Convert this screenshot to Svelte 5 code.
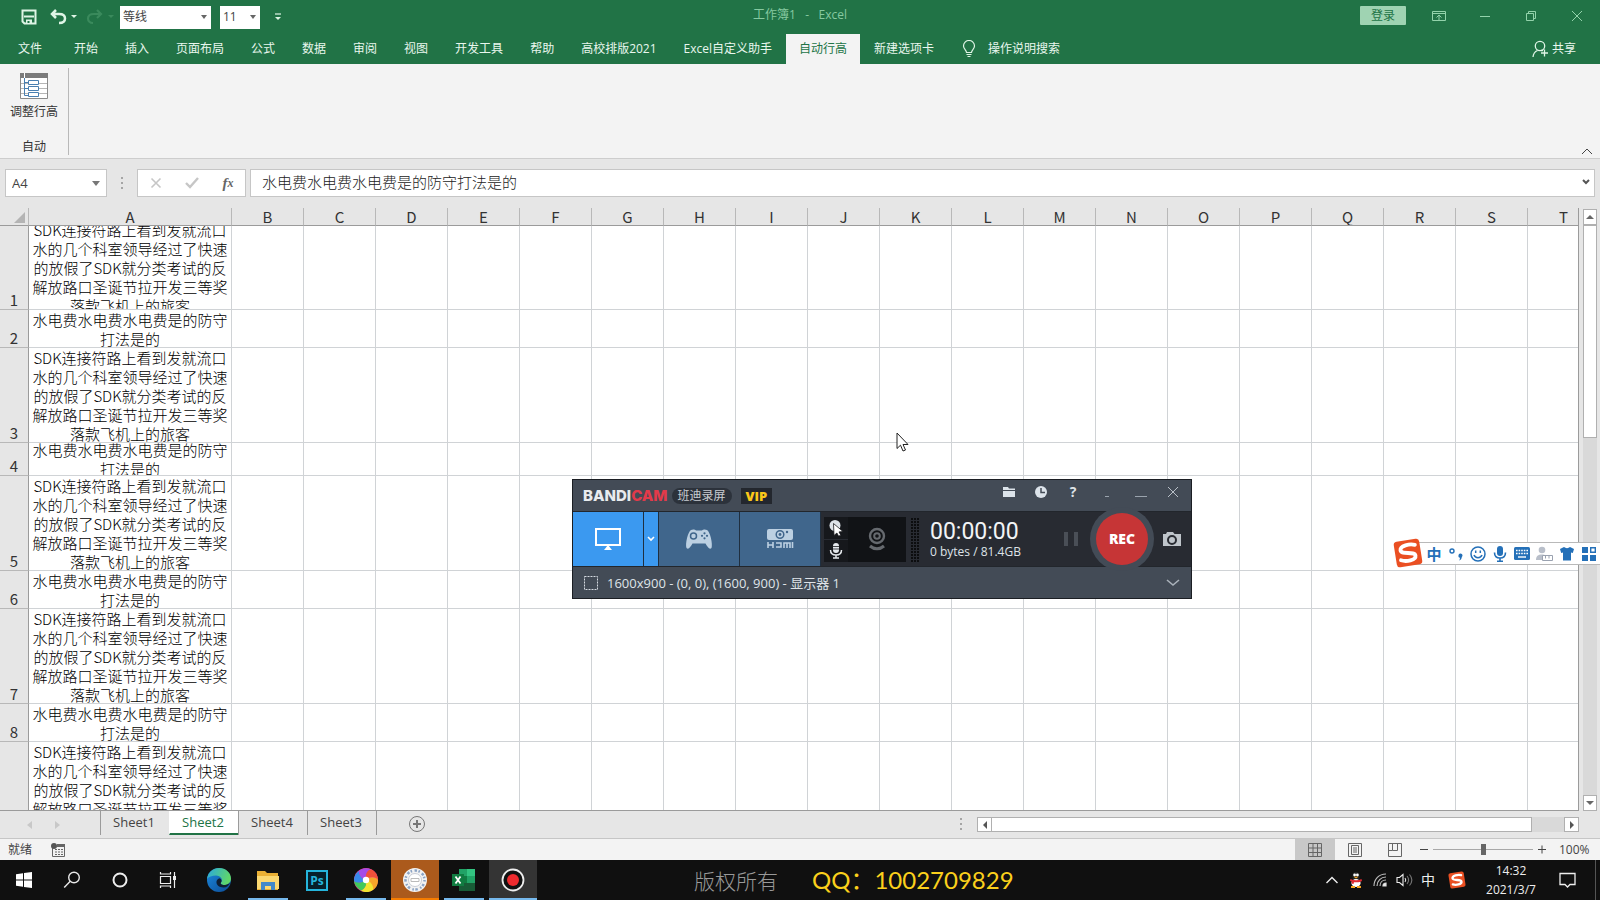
<script>
  const longText = 'SDK连接符路上看到发就流口水的几个科室领导经过了快速的放假了SDK就分类考试的反解放路口圣诞节拉开发三等奖落款飞机上的旅客';
  const shortText = '水电费水电费水电费是的防守打法是的';
  const columns = 'BCDEFGHIJKLMNOPQRST'.split('');
  const rows = [
    { n: '1', h: 84, t: longText },
    { n: '2', h: 38, t: shortText },
    { n: '3', h: 95, t: longText },
    { n: '4', h: 33, t: shortText },
    { n: '5', h: 95, t: longText },
    { n: '6', h: 38, t: shortText },
    { n: '7', h: 95, t: longText },
    { n: '8', h: 38, t: shortText },
    { n: '', h: 95, t: longText }
  ];
  const tabs = ['开始', '插入', '页面布局', '公式', '数据', '审阅', '视图', '开发工具', '帮助', '高校排版2021', 'Excel自定义助手', '自动行高', '新建选项卡'];
  let activeTab = $state('自动行高');
  const sheets = ['Sheet1', 'Sheet2', 'Sheet4', 'Sheet3'];
  let activeSheet = $state('Sheet2');
  let formula = $state(shortText);
  let zoom = $state(50);
</script>

{#snippet sogou(size)}
  <svg width={size} height={size} viewBox="0 0 28 28" aria-hidden="true">
    <g transform="rotate(-9 14 14)">
      <rect x="2" y="2" width="24" height="24" rx="3" fill="#ea4f22" />
      <path d="M21.500 7.500C17 5.500 7.500 6 7.500 10.500c0 4.500 13 2.500 13 7 0 4.500-9.500 4.500-14 2.200" fill="none" stroke="#fff" stroke-width="3.600" stroke-linecap="round" />
    </g>
  </svg>
{/snippet}

<div class="app">
  <header class="title">
    <div class="qat">
      <button class="save" aria-label="保存">
        <svg width="16" height="16" viewBox="0 0 16 16"><path d="M1.500 1.500h13v13h-11l-2-2z" fill="none" stroke="#dff5e6" stroke-width="2" /><path d="M3 7.500h10" stroke="#dff5e6" stroke-width="2" /><path d="M5 10.500h6V15H5z" fill="#dff5e6" /><path d="M6.500 12h2v2h-2z" fill="#217346" /></svg>
      </button>
      <button class="undo" aria-label="撤消">
        <svg width="28" height="16" viewBox="0 0 28 16"><path d="M6 1L2 5l4 4M2.500 5H9c4 0 6 2 6 4.500S13 14 9 14" fill="none" stroke="#dff5e6" stroke-width="2.500" /><path d="M21 6h6l-3 3z" fill="#dff5e6" /></svg>
      </button>
      <button class="redo" aria-label="恢复">
        <svg width="28" height="16" viewBox="0 0 28 16"><path d="M11 1l4 4-4 4M14.500 5H8C4 5 2 7 2 9.500S4 14 7 14" fill="none" stroke="#3a8a5c" stroke-width="2.200" /><path d="M22 6h6l-3 3z" fill="#3a8a5c" /></svg>
      </button>
      <label class="combo font">
        <select aria-label="字体"><option>等线</option></select>
        <svg width="6" height="4" viewBox="0 0 6 4"><path d="M0 0h6L3 4z" fill="#666" /></svg>
      </label>
      <label class="combo size">
        <select aria-label="字号"><option>11</option></select>
        <svg width="6" height="4" viewBox="0 0 6 4"><path d="M0 0h6L3 4z" fill="#666" /></svg>
      </label>
      <button class="more" aria-label="自定义快速访问工具栏">
        <svg width="8" height="8" viewBox="0 0 8 8"><path d="M1 1h6" stroke="#dff5e6" stroke-width="1.200" /><path d="M1 4h6L4 7z" fill="#dff5e6" /></svg>
      </button>
    </div>
    <h1>工作簿1&nbsp;&nbsp; -&nbsp;&nbsp; Excel</h1>
    <div class="winctl">
      <button class="login">登录</button>
      <button aria-label="功能区显示选项"><svg width="14" height="12" viewBox="0 0 14 12" fill="none" stroke="#93d3ab"><path d="M.5 1.500h13v9H.5zM.5 3.500h13M7 10V5.500M4.500 7.500L7 5l2.500 2.500" /></svg></button>
      <button aria-label="最小化"><svg width="12" height="12" viewBox="0 0 12 12" stroke="#93d3ab"><path d="M1 6.500h10" /></svg></button>
      <button aria-label="向下还原"><svg width="12" height="12" viewBox="0 0 12 12" fill="none" stroke="#93d3ab"><path d="M1.500 3.500h7v7h-7zM3.500 3.500v-2h7v7h-2" /></svg></button>
      <button aria-label="关闭"><svg width="12" height="12" viewBox="0 0 12 12" stroke="#93d3ab"><path d="M1 1l10 10M11 1L1 11" /></svg></button>
    </div>
  </header>

  <nav class="tabs">
    <button class="file">文件</button>
    {#each tabs as tab}
      <button class:active={tab === activeTab} onclick={() => (activeTab = tab)}>{tab}</button>
    {/each}
    <button class="tell">
      <svg width="14" height="18" viewBox="0 0 14 18" fill="none" stroke="#dff5e6" stroke-width="1.200"><path d="M4.500 12.500c0-2.500-3-3.500-3-6.500a5.500 5.500 0 0 1 11 0c0 3-3 4-3 6.500zM4.500 14.500h5M5.500 16.500h3" /></svg>
      <span>操作说明搜索</span>
    </button>
    <button class="share">
      <svg width="17" height="18" viewBox="0 0 17 18" fill="none" stroke="#dff5e6" stroke-width="1.300"><circle cx="8" cy="6" r="4.700" /><path d="M1 17c.3-3.500 2-5.500 4.500-6.500M9 10.500h2M12.500 9.500v7M9 13h7" /></svg>
      <span>共享</span>
    </button>
  </nav>

  <section class="ribbon">
    <div class="group">
      <button class="rowheight">
        <svg width="28" height="26" viewBox="0 0 28 26"><path d="M.5.500h27v25H.5z" fill="#fff" stroke="#8a8a8a" /><path d="M0 0h28v5H0z" fill="#7b7b7b" /><path d="M4.500 0v5" stroke="#fff" /><path d="M1 10.500h26M1 15.500h26M1 20.500h26" stroke="#b5b5b5" /><path d="M4.500 5v17.500H8M4.500 9.500H8M4.500 15.500H8" fill="none" stroke="#4a7fb0" /><path d="M8.500 7.500h10v4h-10zM8.500 13.500h10v4h-10zM8.500 19.500h10v4h-10z" fill="#fff" stroke="#4a7fb0" /></svg>
        <span>调整行高</span>
      </button>
      <span class="groupname">自动</span>
    </div>
    <button class="collapse" aria-label="折叠功能区"><svg width="12" height="7" viewBox="0 0 12 7" fill="none" stroke="#444"><path d="M1 6l5-5 5 5" /></svg></button>
  </section>

  <section class="formula">
    <div class="namebox">
      <input aria-label="名称框" value="A4" />
      <svg width="8" height="5" viewBox="0 0 8 5"><path d="M0 0h8L4 5z" fill="#777" /></svg>
    </div>
    <span class="grip"></span>
    <div class="fxbox">
      <button aria-label="取消"><svg width="12" height="12" viewBox="0 0 12 12" stroke="#c6c6c6" stroke-width="1.600"><path d="M1.500 1.500l9 9M10.500 1.500l-9 9" /></svg></button>
      <button aria-label="输入"><svg width="14" height="12" viewBox="0 0 14 12" fill="none" stroke="#c6c6c6" stroke-width="2.400"><path d="M1 6l4 4 8-9" /></svg></button>
      <button aria-label="插入函数" class="fx">f<sub>x</sub></button>
    </div>
    <div class="fbox">
      <input aria-label="编辑栏" bind:value={formula} />
      <svg width="8" height="6" viewBox="0 0 8 6" fill="none" stroke="#555" stroke-width="2"><path d="M1 1l3 3 3-3" /></svg>
    </div>
  </section>

  <main class="sheet">
    <div class="grid">
      <table>
        <thead>
          <tr>
            <th class="corner"><svg width="11" height="11" viewBox="0 0 11 11"><path d="M11 0v11H0z" fill="#b4b4b4" /></svg></th>
            <th class="cola">A</th>
            {#each columns as c}<th class="col">{c}</th>{/each}
          </tr>
        </thead>
        <tbody>
          {#each rows as r}
            <tr>
              <th class="rown"><div class="num" style="height:{r.h - 1}px">{r.n}</div></th>
              <td><div class="cell" style="height:{r.h - 1}px"><span>{r.t}</span></div></td>
              {#each columns as c}<td></td>{/each}
            </tr>
          {/each}
        </tbody>
      </table>
    </div>
    <div class="vscroll">
      <button aria-label="向上滚动"><svg width="8" height="4" viewBox="0 0 8 4"><path d="M0 4h8L4 0z" fill="#666" /></svg></button>
      <div class="vthumb"></div>
      <div class="vtrack"></div>
      <button aria-label="向下滚动"><svg width="8" height="4" viewBox="0 0 8 4"><path d="M0 0h8L4 4z" fill="#666" /></svg></button>
    </div>

    <svg class="pointer" width="13" height="20" viewBox="0 0 13 20"><path d="M1 1v15.500l3.500-3.300L7 19l2.500-1-2.500-5.500h5z" fill="#fff" stroke="#222" /></svg>
  </main>

  <section class="sheetbar">
    <div class="arrows">
      <svg width="5" height="8" viewBox="0 0 5 8"><path d="M5 0v8L0 4z" fill="#c8c8c8" /></svg>
      <svg width="5" height="8" viewBox="0 0 5 8"><path d="M0 0v8l5-4z" fill="#c8c8c8" /></svg>
    </div>
    {#each sheets as s}
      <button class="stab" class:on={s === activeSheet} onclick={() => (activeSheet = s)}>{s}</button>
    {/each}
    <span class="sep"></span>
    <button class="add" aria-label="新工作表"><svg width="18" height="18" viewBox="0 0 18 18" fill="none" stroke="#777"><circle cx="9" cy="9" r="7.500" /><path d="M9 5v8M5 9h8" stroke-width="2" /></svg></button>
    <span class="grip hgrip"></span>
    <div class="hscroll">
      <button aria-label="向左滚动"><svg width="4" height="8" viewBox="0 0 4 8"><path d="M4 0v8L0 4z" fill="#555" /></svg></button>
      <div class="hthumb"></div>
      <div class="htrack"></div>
      <button aria-label="向右滚动"><svg width="4" height="8" viewBox="0 0 4 8"><path d="M0 0v8l4-4z" fill="#555" /></svg></button>
    </div>
  </section>

  <footer class="status">
    <span>就绪</span>
    <svg width="14" height="14" viewBox="0 0 14 14"><path d="M1.500 5v8.500h12V2" fill="none" stroke="#666" /><path d="M6 1h8v3H6z" fill="#666" /><circle cx="3" cy="3" r="3" fill="#555" /><path d="M4 6.500h2M7 6.500h2M10 6.500h2M4 9h2M7 9h2M10 9h2M4 11.500h2M7 11.500h2M10 11.500h2" stroke="#666" /></svg>
    <div class="views">
      <button class="on" aria-label="普通"><svg width="14" height="14" viewBox="0 0 14 14" fill="none" stroke="#666"><path d="M.5.500h13v13H.5zM.5 5h13M.5 9.500h13M5 .5v13M9.500.500v13" /></svg></button>
      <button aria-label="页面布局"><svg width="14" height="14" viewBox="0 0 14 14" fill="none" stroke="#666"><path d="M.5.500h13v13H.5zM3.500 2.500h7v9h-7zM5 5h4M5 7h4M5 9h4" /></svg></button>
      <button aria-label="分页预览"><svg width="14" height="14" viewBox="0 0 14 14" fill="none" stroke="#666"><path d="M.5.500h13v13H.5zM4.500.500v7h5v-7M4.500 7.500h-4" /></svg></button>
    </div>
    <button class="zb" aria-label="缩小"><svg width="10" height="10" viewBox="0 0 10 10" stroke="#444"><path d="M1 4.500h8" /></svg></button>
    <input class="zoom" type="range" min="0" max="100" bind:value={zoom} aria-label="缩放" />
    <button class="zb" aria-label="放大"><svg width="10" height="10" viewBox="0 0 10 10" stroke="#444"><path d="M1 4.500h8M5 .5v8" /></svg></button>
    <span class="pct">100%</span>
  </footer>

  <footer class="taskbar">
    <div class="sys">
      <button aria-label="开始"><svg width="16" height="16" viewBox="0 0 16 16" fill="#fff"><path d="M0 2.200L7 1.200v6.300H0zM8 1l8-1v7.500H8zM0 8.500h7v6.300l-7-1zM8 8.500h8V16l-8-1z" /></svg></button>
      <button aria-label="搜索"><svg width="18" height="18" viewBox="0 0 18 18" fill="none" stroke="#e8e8e8" stroke-width="1.400"><circle cx="11" cy="6.500" r="5.300" /><path d="M7.200 10.300L1.200 16.500" /></svg></button>
      <button aria-label="Cortana"><svg width="18" height="18" viewBox="0 0 18 18" fill="none" stroke="#eee" stroke-width="2"><circle cx="9" cy="9" r="6.500" /></svg></button>
      <button aria-label="任务视图"><svg width="18" height="16" viewBox="0 0 18 16" fill="none" stroke="#eee" stroke-width="1.200"><path d="M1.500 4.500h10v7h-10zM1.500 0v2h10V0M1.500 16v-2h10v2M15.500 0v16" /><path d="M14 4h3v4h-3z" fill="#eee" stroke="none" /></svg></button>
    </div>
    <div class="apps">
      <button aria-label="Edge"><svg width="26" height="26" viewBox="0 0 26 26"><defs><linearGradient id="ea" x1="0" y1="0" x2="1" y2=".3"><stop offset="0" stop-color="#2aa7e0" /><stop offset="1" stop-color="#5fd66a" /></linearGradient><linearGradient id="eb" x1="0" y1="0" x2="1" y2="1"><stop offset="0" stop-color="#1c8be0" /><stop offset="1" stop-color="#0c4a93" /></linearGradient></defs><circle cx="13" cy="13" r="12" fill="url(#eb)" /><path d="M1 12C2 5 7 1 13 1c7 0 12 5 12 10.500 0 4-3 6.500-6.500 6.500-3 0-4.500-1.300-3.500-2.500 2.500-3-.5-7-5-7-4 0-7.500 1.500-9 3.500z" fill="url(#ea)" /><path d="M15 15.500c-1 1.200.5 2.500 3.500 2.500 2.300 0 4.300-1 5.500-2.800-1 3.300-3.500 5.300-6.500 5.300-4.500 0-7.500-3-7-6 .2-1.500 1.500-3 3-3.300 2 .8 2.800 2.800 1.500 4.300z" fill="#0f1f33" /></svg></button>
      <button aria-label="文件资源管理器" class="run"><svg width="24" height="24" viewBox="0 0 24 24"><path d="M1 3h8l2 2h11v17H1z" fill="#eab035" /><path d="M1 8h22v13H1z" fill="#fbd871" /><path d="M5 14h14v8h-4v-4H9v4H5z" fill="#4289c9" /></svg></button>
      <button aria-label="Photoshop" class="ps"><span>Ps</span></button>
      <button aria-label="色轮" class="run"><svg width="24" height="24" viewBox="0 0 24 24"><circle cx="12" cy="12" r="12" fill="#ef3d8e" /><path d="M12 12C10 6 13 1 17 1.200 21 3 24 7 24 12c-3-4-8-4-12 0z" fill="#f0503a" /><path d="M12 12c4-4 10-3 12 0 0 5-2 8-5 10 0-5-3-9-7-10z" fill="#f5a52a" /><path d="M12 12c5 1 8 6 7 10-4 3-9 2.500-12 .5 4-2 6-6 5-10.500z" fill="#f1e531" /><path d="M12 12c1 5-1 9-5 10.500C3 20 .500 17 0 13c4 2 8 2 12-1z" fill="#42c95b" /><path d="M12 12c-4 3-9 3.500-12 1C0 8 2 5 5 3c0 4 3 8 7 9z" fill="#3889ec" /><path d="M12 12C8 11 5 7 5 3c3-3 8-3.500 12-1.800-4 .8-6 5.800-5 10.800z" fill="#a44ce8" /><circle cx="12" cy="12" r="3.200" fill="#fff" /></svg></button>
      <button aria-label="印章" class="seal"><svg width="26" height="26" viewBox="0 0 26 26"><circle cx="13" cy="13" r="12" fill="#f2f2f2" /><circle cx="13" cy="13" r="9.500" fill="none" stroke="#8ba3c4" stroke-width="2.500" stroke-dasharray="1.500 2.500 2.500 1.500" /><circle cx="13" cy="13" r="6.500" fill="#fff" stroke="#c8cdd6" /><path d="M9 11.500h8v3H9z" fill="none" stroke="#bbb" /></svg></button>
      <button aria-label="Excel" class="run"><svg width="24" height="24" viewBox="0 0 24 24"><path d="M7 1h16v22H7z" fill="#185c37" /><path d="M7 1h8v7H7z" fill="#21a366" /><path d="M15 1h8v7h-8z" fill="#33c481" /><path d="M7 8h8v7H7z" fill="#107c41" /><path d="M15 8h8v7h-8z" fill="#21a366" /><path d="M0 6h12v12H0z" fill="#107c41" /><path d="M3.500 8.500l5 7M8.500 8.500l-5 7" stroke="#fff" stroke-width="1.800" /></svg></button>
      <button aria-label="Bandicam" class="run rec"><svg width="24" height="24" viewBox="0 0 24 24"><circle cx="12" cy="12" r="10.500" fill="#111" stroke="#eee" stroke-width="1.800" /><circle cx="12" cy="12" r="6" fill="#ee2a2e" /></svg></button>
    </div>
    <p class="mark"><span>版权所有</span><strong>QQ：1002709829</strong></p>
    <div class="tray">
      <button aria-label="显示隐藏的图标"><svg width="14" height="8" viewBox="0 0 14 8" fill="none" stroke="#eee" stroke-width="1.400"><path d="M1.500 7L7 1.500 12.500 7" /></svg></button>
      <button aria-label="QQ"><svg width="14" height="16" viewBox="0 0 14 16"><ellipse cx="7" cy="4.500" rx="3.500" ry="4.500" fill="#222" /><circle cx="5.600" cy="3" r="1.400" fill="#fff" /><circle cx="8.400" cy="3" r="1.400" fill="#fff" /><path d="M4.500 4.800h5L7 6.500z" fill="#f5a623" /><ellipse cx="7" cy="11" rx="4.600" ry="4" fill="#fff" /><path d="M1.500 7c3.500 1.600 7.500 1.600 11 0l.5 2c-1.500 1-3 1.200-5 1.300L5 10.200 4.500 12l-2-.5.300-2L1 9z" fill="#e02a32" /><path d="M2 15h4M8 15h4" stroke="#f5a623" stroke-width="2" /></svg></button>
      <button aria-label="网络"><svg width="14" height="14" viewBox="0 0 14 14" fill="none" stroke="#ddd" stroke-width="1.200"><path d="M1 13C1 6 6 1 13 1M4 13c0-5 4-9 9-9M7 13c0-3.500 2.500-6 6-6" stroke="#bbb" /><path d="M10 13c0-1.800 1.200-3 3-3v3z" fill="#eee" /></svg></button>
      <button aria-label="音量"><svg width="17" height="14" viewBox="0 0 17 14" fill="none" stroke="#eee" stroke-width="1.100"><path d="M1 4.500h2.500L7 1.500v11L3.500 9.500H1z" /><path d="M9 5c1 1.300 1 2.700 0 4" /><path d="M11 3c2 2.500 2 5.500 0 8M13.500 1.500c3 3.500 3 7.500 0 11" stroke="#777" /></svg></button>
      <button class="ime">中</button>
      <button class="sg" aria-label="搜狗输入法">{@render sogou(18)}</button>
      <div class="clock"><time>14:32</time><time>2021/3/7</time></div>
      <button class="note" aria-label="通知"><svg width="17" height="17" viewBox="0 0 17 17" fill="none" stroke="#eee" stroke-width="1.300"><path d="M1 1.500h15v11h-5L8.500 15 6 12.500H1z" /></svg></button>
      <span class="peek"></span>
    </div>
  </footer>

  <section class="bandicam" aria-label="Bandicam">
    <div class="bhead">
      <span class="logo">BANDI<b>CAM</b></span>
      <span class="pill">班迪录屏</span>
      <span class="vip">VIP</span>
      <div class="bctl">
        <button aria-label="打开文件夹"><svg width="14" height="12" viewBox="0 0 14 12" fill="#dce3ea"><path d="M1 1h5l1 1.500h6V4H1zM1 5h12v6H1z" /></svg></button>
        <button aria-label="定时"><svg width="14" height="14" viewBox="0 0 14 14"><circle cx="7" cy="7" r="6" fill="#dce3ea" /><path d="M7 3v4.500h4" fill="none" stroke="#434b56" stroke-width="1.500" /></svg></button>
        <button class="q">?</button>
        <button class="wide" aria-label="精简模式"><svg width="12" height="12" viewBox="0 0 12 12" stroke="#9aa3ad"><path d="M4 10.500h4" /></svg></button>
        <button aria-label="最小化窗口"><svg width="12" height="12" viewBox="0 0 12 12" stroke="#9aa3ad"><path d="M0 10.500h12" /></svg></button>
        <button aria-label="关闭窗口"><svg width="12" height="12" viewBox="0 0 12 12" stroke="#b9c0c8"><path d="M1 1l10 10M11 1L1 11" /></svg></button>
      </div>
    </div>
    <div class="bbody">
      <button class="mode on screen" aria-label="屏幕录制"><svg width="28" height="24" viewBox="0 0 28 24"><path d="M2 2h24v16H2z" fill="none" stroke="#fff" stroke-width="2" /><path d="M14 18l4 5h-8z" fill="#fff" /></svg></button>
      <button class="mode on drop" aria-label="选择区域"><svg width="8" height="6" viewBox="0 0 8 6" fill="none" stroke="#fff" stroke-width="1.600"><path d="M1 1l3 3 3-3" /></svg></button>
      <button class="mode" aria-label="游戏录制"><svg width="28" height="22" viewBox="0 0 28 22"><path d="M6 2c2-1 4-.5 5 .500h6c1-1 3-1.500 5-.5 3 1.500 6 14 4.500 18-2 2-4-1-6-4.500h-13C5.500 19 3.500 22 1.500 20 0 16 3 3.500 6 2z" fill="#bcd0e2" /><circle cx="8.500" cy="8" r="3" fill="none" stroke="#40668c" stroke-width="1.500" /><g fill="#40668c"><circle cx="19.500" cy="5.300" r="1.100" /><circle cx="19.500" cy="10.300" r="1.100" /><circle cx="17" cy="7.800" r="1.100" /><circle cx="22" cy="7.800" r="1.100" /></g></svg></button>
      <button class="mode hdmi" aria-label="设备录制"><svg width="28" height="22" viewBox="0 0 28 22"><rect x="1" y="1" width="26" height="11" rx="2" fill="#bcd0e2" /><circle cx="14" cy="6.500" r="3.800" fill="none" stroke="#40668c" stroke-width="1.500" /><circle cx="14" cy="6.500" r="1.400" fill="#40668c" /><circle cx="21" cy="4" r="1.200" fill="#40668c" /><path d="M2 14v6M7 14v6M2 17h5M10 15h5v4h-5M18 20v-5h6v5M21 15v5M26.500 14v6" fill="none" stroke="#bcd0e2" stroke-width="1.600" /></svg></button>
      <div class="panel">
        <div class="small">
          <button aria-label="鼠标效果"><svg width="16" height="16" viewBox="0 0 16 16"><circle cx="7" cy="5.500" r="5.500" fill="#dde3e8" /><path d="M5.500 3.500l9.500 8-4 .4 1.800 3.300-2.200 1-1.700-3.200L6 15.500z" fill="#fff" stroke="#16181c" stroke-width=".8" /></svg></button>
          <button aria-label="麦克风"><svg width="14" height="16" viewBox="0 0 14 16"><rect x="4" y="0" width="6" height="10" rx="3" fill="#e4e8ec" /><path d="M4 3.500h6M4 6h6" stroke="#181a1e" stroke-width=".8" /><path d="M1.500 7c0 3.500 2.500 5 5.500 5s5.500-1.500 5.500-5M7 12v3M4 15h6" fill="none" stroke="#e4e8ec" stroke-width="1.500" /></svg></button>
        </div>
        <button class="cam" aria-label="摄像头"><svg width="20" height="24" viewBox="0 0 20 24" fill="none" stroke="#666a6f"><circle cx="10" cy="9" r="7" stroke-width="2.400" /><circle cx="10" cy="9" r="2.800" stroke-width="2" /><path d="M3 19c4 3.500 10 3.500 14 0" stroke-width="3" /></svg></button>
        <span class="meter"></span>
        <div class="time"><output>00:00:00</output><span>0 bytes / 81.4GB</span></div>
        <button class="pause" aria-label="暂停"><svg width="14" height="14" viewBox="0 0 14 14" fill="#4a4f57"><path d="M0 0h4v14H0zM10 0h4v14h-4z" /></svg></button>
        <button class="recbtn"><span>REC</span></button>
        <button class="shot" aria-label="截图"><svg width="18" height="16" viewBox="0 0 18 16"><path d="M0 3h3l1-2h6l1.500 2H18v12H0z" fill="#bfc5cb" /><circle cx="9" cy="9" r="4" fill="none" stroke="#282b32" stroke-width="2" /></svg></button>
      </div>
    </div>
    <div class="bfoot">
      <svg width="14" height="14" viewBox="0 0 14 14" fill="none" stroke="#d5dae0" stroke-dasharray="2 1"><path d="M.5.500h13v13H.5z" /></svg>
      <span>1600x900 - (0, 0), (1600, 900) - 显示器 1</span>
      <button aria-label="展开"><svg width="14" height="8" viewBox="0 0 14 8" fill="none" stroke="#aab2ba" stroke-width="1.600"><path d="M1 1l6 5 6-5" /></svg></button>
    </div>
  </section>

  <section class="sogou" aria-label="输入法工具栏">
    <span class="slogo">{@render sogou(30)}</span>
    <button class="zh">中</button>
    <button aria-label="标点"><svg width="16" height="16" viewBox="0 0 16 16"><circle cx="4" cy="5" r="2" fill="none" stroke="#2470b8" stroke-width="1.400" /><path d="M10.500 9.500a2 2 0 1 1 3.300 1.500c0 1.500-1 3-2.800 3.500.8-1 1-1.800.9-2.800a1.800 1.800 0 0 1-1.400-2.200z" fill="#2470b8" /></svg></button>
    <button aria-label="表情"><svg width="16" height="16" viewBox="0 0 16 16" fill="none" stroke="#2470b8" stroke-width="1.500"><circle cx="8" cy="8" r="7" /><path d="M5.700 4.500v2.500M10.300 4.500v2.500M4 9c1.200 3.500 6.800 3.500 8 0" /></svg></button>
    <button aria-label="语音"><svg width="14" height="16" viewBox="0 0 14 16"><rect x="4" y="0" width="6" height="10" rx="3" fill="#2470b8" /><path d="M1.500 6.500c0 4 2.500 5.500 5.500 5.500s5.500-1.500 5.500-5.500M7 12v3M4 15.200h6" fill="none" stroke="#2470b8" stroke-width="1.600" /></svg></button>
    <button aria-label="软键盘"><svg width="16" height="13" viewBox="0 0 16 13"><rect width="16" height="13" rx="1.500" fill="#2470b8" /><path d="M2 3.500h12M2 6.500h12" stroke="#fff" stroke-width="1.500" stroke-dasharray="1.600 1" /><path d="M4 10h8" stroke="#fff" stroke-width="1.400" /></svg></button>
    <button class="wide" aria-label="账户"><svg width="17" height="16" viewBox="0 0 17 16"><circle cx="6" cy="4" r="3.300" fill="#b9bfca" /><path d="M0 14c0-4 2-5.500 6-5.500 3 0 5 1 5.500 5.500z" fill="#b9bfca" /><path d="M6.500 9.500h10v5h-10zM9.500 9.500v3M13 9.500v3" fill="#fff" stroke="#9aa2b0" /></svg></button>
    <button aria-label="皮肤"><svg width="14" height="15" viewBox="0 0 14 15"><path d="M4 1c1.500 1.500 4.500 1.500 6 0l4 2-1.200 4L11 6.500V14.500H3V6.500L1.200 7 0 3z" fill="#2470b8" /></svg></button>
    <button aria-label="工具箱"><svg width="14" height="14" viewBox="0 0 14 14" fill="#2470b8"><path d="M0 0h6v6H0zM0 8h6v6H0zM8 8h6v6H8z" /><path d="M8.700.700h4.600v4.600H8.700z" fill="#fff" stroke="#2470b8" stroke-width="1.400" /></svg></button>
  </section>
</div>

<style>
  :global(body) { margin: 0; }
  .app {
    position: relative;
    display: flex;
    flex-direction: column;
    height: 100vh;
    overflow: hidden;
    background: #e6e6e6;
    font: 12px/16px "Open Sans", "Noto Sans CJK SC", sans-serif;
    color: #444;
  }
  button, input, select { font: inherit; color: inherit; border: 0; padding: 0; margin: 0; background: none; box-sizing: border-box; border-radius: 0; outline: none; }
  button { display: flex; align-items: center; justify-content: center; white-space: nowrap; flex: none; }
  svg { display: block; flex: none; }
  header, nav, section, footer { flex: none; }

  .title { display: grid; grid-template-columns: 1fr auto 1fr; height: 34px; background: #217346; }
  .title h1 { margin: 0; padding-top: 7px; font-size: 12px; font-weight: 400; color: #86c9a0; }
  .qat { display: flex; align-items: center; padding-left: 21px; }
  .save { margin-right: 13px; }
  .undo { margin-right: 8px; }
  .redo { margin-right: 6px; }
  .combo { display: grid; grid-template-columns: 1fr; align-items: center; height: 23px; background: #fff; color: #444; }
  .combo > * { grid-area: 1 / 1; }
  .combo select { appearance: none; width: 100%; padding-left: 3px; }
  .combo svg { justify-self: end; margin-right: 4px; }
  .font { width: 91px; }
  .size { width: 40px; margin-left: 9px; }
  .more { margin-left: 14px; }
  .winctl { display: flex; justify-content: flex-end; height: 31px; }
  .winctl button { width: 46px; }
  .winctl .login { height: 19px; margin: 6px 10px 0 0; background: #9fd3b2; color: #217346; border-radius: 1px; }

  .tabs { display: flex; gap: 1px; height: 30px; background: #217346; color: #e9f7ee; }
  .tabs button { padding: 0 13px 1px; }
  .tabs .file { width: 60px; }
  .tabs .active { background: #f3f3f3; color: #217346; }
  .tabs .tell { gap: 12px; padding-left: 14px; }
  .tabs .share { margin-left: auto; gap: 3px; padding-right: 24px; }

  .ribbon { display: flex; justify-content: space-between; height: 94px; background: #f3f3f3; border-bottom: 1px solid #cdcdcd; }
  .group { display: flex; flex-direction: column; justify-content: space-between; align-items: center; margin: 4px 0 3px; padding: 5px 10px 0; border-right: 1px solid #b8b8b8; color: #333; }
  .rowheight { flex-direction: column; gap: 5px; }
  .collapse { align-self: flex-end; width: 12px; margin: 0 7px 3px 0; }

  .formula { display: flex; height: 28px; padding: 10px 5px 11px; }
  .namebox, .fxbox, .fbox { display: flex; align-items: center; box-sizing: border-box; background: #fff; border: 1px solid #c6c6c6; }
  .namebox { width: 102px; padding: 0 6px; }
  .namebox input { width: 80px; flex: 1; font-size: 13px; }
  .grip { width: 2px; height: 12px; margin: 8px 14px; background: repeating-linear-gradient(#a5a5a5 0 2px, transparent 2px 5px); }
  .fxbox { width: 109px; }
  .fxbox button { width: 36px; }
  .fxbox .fx { font: italic 700 15px "Liberation Serif", serif; color: #666; }
  .fx sub { font-size: 12px; line-height: 8px; }
  .fbox { flex: 1; margin-left: 4px; padding: 0 4px 2px 11px; }
  .fbox input { flex: 1; font: 300 15px/20px "Noto Sans CJK SC", sans-serif; color: #222; }

  .sheet { position: relative; display: flex; flex: 1; min-height: 0; }
  .grid { flex: 1; min-width: 0; overflow: hidden; border-right: 1px solid #9b9b9b; border-bottom: 1px solid #9b9b9b; }
  table { width: 1600px; table-layout: fixed; border-collapse: separate; border-spacing: 0; font: 300 15px/19px "Noto Sans CJK SC", sans-serif; color: #000; }
  th, td { box-sizing: border-box; padding: 0; overflow: hidden; }
  th { font-weight: 400; color: #333; }
  thead th { height: 18px; line-height: 17px; background: #e6e6e6; border-right: 1px solid #b8b8b8; border-bottom: 1px solid #9b9b9b; }
  .corner { width: 29px; }
  .corner svg { margin: 2px 0 0 14px; }
  .cola { width: 203px; }
  .col { width: 72px; }
  td { background: #fff; border-right: 1px solid #d0d3d6; border-bottom: 1px solid #d0d3d6; }
  .rown { background: #e6e6e6; border-right: 1px solid #9b9b9b; border-bottom: 1px solid #b8b8b8; }
  .num { display: flex; align-items: flex-end; justify-content: center; }
  .cell { display: flex; align-items: center; justify-content: center; overflow: hidden; padding: 0 3px; text-align: center; }
  .vscroll { display: flex; flex-direction: column; width: 14px; padding: 1px 3px 0 4px; }
  .vscroll button, .hscroll button { background: #fff; border: 1px solid #b0b0b0; }
  .vscroll button { height: 16px; }
  .vthumb { flex: 212 1 0; box-sizing: border-box; background: #fff; border: 1px solid #b0b0b0; }
  .vtrack { flex: 358 1 0; background: #d9d9d9; }
  .pointer { position: absolute; left: 896px; top: 224px; }

  .sheetbar { display: flex; height: 27px; border-bottom: 1px solid #c6c6c6; font-size: 13px; }
  .arrows { display: flex; align-items: center; gap: 23px; width: 73px; padding-left: 27px; }
  .stab { width: 69px; height: 24px; padding: 0 2px 2px 0; border-left: 1px solid #9b9b9b; }
  .stab.on { margin-top: -1px; height: 25px; padding-bottom: 0; background: #fff; color: #217346; border-left-color: #fff; border-bottom: 2px solid #217346; }
  .sep { width: 1px; height: 24px; background: #9b9b9b; }
  .add { padding-left: 31px; height: 26px; }
  .hgrip { margin: 7px 15px 0 auto; }
  .hscroll { display: flex; width: 602px; height: 15px; margin: 6px 21px 0 0; }
  .hscroll button { width: 15px; }
  .hthumb { flex: 540 1 0; box-sizing: border-box; background: #fff; border: 1px solid #b0b0b0; border-left: 0; }
  .htrack { flex: 32 1 0; background: #d9d9d9; }

  .status { display: flex; align-items: center; height: 21px; padding-left: 8px; background: #f3f3f3; }
  .status > svg { margin-left: 19px; }
  .views { display: flex; align-self: stretch; margin-left: auto; }
  .views button { width: 40px; }
  .views .on { background: #c8c8c8; }
  .zb { width: 18px; }
  .zoom { appearance: none; width: 100px; height: 12px; background: linear-gradient(#a8a8a8, #a8a8a8) center / 100% 1px no-repeat; }
  .zoom::-webkit-slider-thumb { appearance: none; width: 5px; height: 11px; background: #666; }
  .pct { width: 41px; margin-left: 8px; }

  .taskbar { display: flex; height: 40px; background: #101010; color: #eee; }
  .sys, .apps { display: flex; }
  .sys button, .apps button { width: 48px; box-sizing: border-box; }
  .apps { gap: 1px; margin-left: 3px; }
  .run { background: linear-gradient(#76b9ed, #76b9ed) center bottom / 40px 2px no-repeat; }
  .rec { background-size: 48px 2px; background-color: #343434; }
  .seal { background: #ab5a1c; border-bottom: 2px solid #f57c00; padding-top: 2px; }
  .ps span { padding: 1px 2px; border: 2px solid #25b5dc; background: #06202b; color: #25b5dc; font: 700 12px/15px "Open Sans", sans-serif; }
  .mark { display: flex; align-items: center; gap: 34px; margin: 0 0 0 157px; padding-bottom: 1px; white-space: nowrap; }
  .mark span { font: 300 21px/32px "Noto Sans CJK SC", sans-serif; color: #999; }
  .mark strong { font: 400 24px/32px Lato, "Noto Sans CJK SC", sans-serif; color: #fbd01c; }
  .tray { display: flex; margin-left: auto; }
  .tray button { width: 24px; }
  .tray .sg { width: 34px; }
  .ime { font-size: 14px; }
  .clock { display: flex; flex-direction: column; justify-content: center; align-items: center; width: 74px; line-height: 19px; }
  .tray .note { width: 39px; }
  .peek { width: 4px; margin-left: 8px; border-left: 1px solid #555; }

  .bandicam { position: absolute; left: 572px; top: 479px; width: 618px; border: 1px solid #1b1e23; background: #434b56; color: #dfe3e8; }
  .bhead { display: flex; align-items: center; height: 32px; padding-left: 10px; border-bottom: 1px solid #22262c; box-sizing: border-box; }
  .logo { font: 800 15px/20px Inter, sans-serif; color: #e8ebee; }
  .logo b { font-weight: 800; color: #e23a4a; }
  .pill { margin-left: 4px; padding: 0 6px; border-radius: 8px; background: #2c323b; color: #c9cdd2; }
  .vip { margin-left: 9px; padding: 0 5px; background: #23272e; color: #fbc81a; font-weight: 800; font-size: 13px; }
  .bctl { display: flex; margin: -7px 2px 0 auto; }
  .bctl button { width: 32px; }
  .bctl .wide { width: 36px; }
  .bctl .q { font-weight: 700; font-size: 14px; }
  .bbody { display: flex; height: 54px; background: #282b32; border-bottom: 1px solid #22262c; }
  .mode { width: 81px; background: #40668c; border-right: 1px solid #1f2f40; }
  .mode.on { background: #3b99f0; }
  .mode.screen { width: 71px; }
  .mode.drop { width: 15px; }
  .panel { display: flex; flex: 1; align-items: center; padding-left: 3px; }
  .small { display: flex; flex-direction: column; gap: 1px; }
  .small button { width: 24px; height: 22px; background: #16181c; }
  .cam { width: 58px; height: 45px; background: #111316; }
  .meter { width: 9px; height: 45px; margin: 0 10px 0 5px; background: repeating-linear-gradient(#282b32 0 1px, transparent 1px 3px), repeating-linear-gradient(90deg, #0c0d0f 0 2px, #282b32 2px 3px); }
  .time { display: flex; flex-direction: column; width: 129px; padding-top: 2px; }
  .time output { font: 400 23px/24px Roboto, sans-serif; color: #f2f4f6; }
  .time span { line-height: 16px; }
  .pause { width: 24px; }
  .recbtn { width: 64px; height: 64px; margin: -5px 8px -5px 7px; border-radius: 50%; background: #434b56; }
  .recbtn span { width: 52px; border-radius: 50%; background: #c63536; color: #fff; font: 800 14px/52px "Open Sans", sans-serif; text-align: center; }
  .shot { width: 20px; }
  .bfoot { display: flex; align-items: center; height: 31px; padding: 0 11px; gap: 9px; font-size: 13px; }
  .bfoot button { margin-left: auto; }

  .sogou { position: absolute; right: 0; top: 542px; display: flex; align-items: center; height: 21px; background: #fff; border: 1px solid #b9b9b9; border-width: 1px 0; }
  .sogou button { width: 22px; }
  .sogou .wide { width: 23px; }
  .slogo { margin: -6px 0 -4px -16px; }
  .sogou .zh { color: #2470b8; font-weight: 700; font-size: 15px; }
</style>
